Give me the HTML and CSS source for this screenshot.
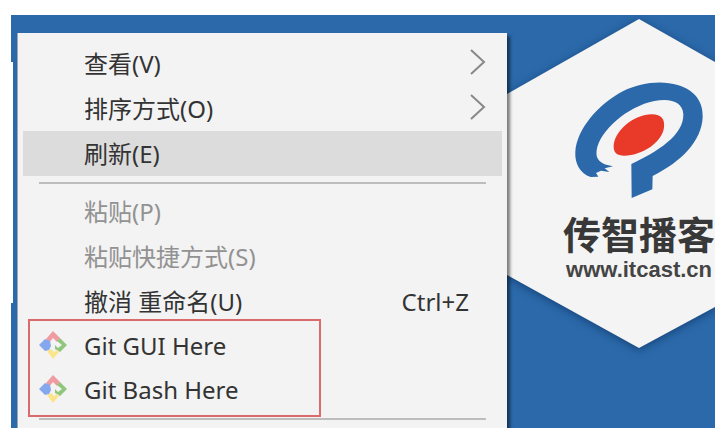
FILE: index.html
```html
<!DOCTYPE html>
<html lang="zh-CN">
<head>
<meta charset="utf-8">
<title>桌面</title>
<link rel="stylesheet" href="styles.css">
</head>
<body>
<svg class="defs" aria-hidden="true">
  <symbol id="git" viewBox="0 0 30 30">
    <path d="M15 1 L22 8 L19 12 L15 8 L11 13 L8 9Z" fill="#ee9ba1"/>
    <path d="M1 15 L7 9 L12 11 L13 16 L11 20 L7 21Z" fill="#85a7ee"/>
    <path d="M22 8 L29 15 L22 22 L17 19 L17 15 L20 18 L24 15 L19 11Z" fill="#8fc67c"/>
    <path d="M9 21 L13 19 L16 22 L20 20 L21 22 L15 29Z" fill="#fae58c"/>
  </symbol>
  <symbol id="arrow" viewBox="0 0 16 26">
    <path d="M1 1 L14 13 L1 25" fill="none" stroke="#888" stroke-width="2"/>
  </symbol>
</svg>
<main class="desktop">
  <nav class="menu" aria-label="右键菜单">
    <button class="item">查看(V)<svg class="arrow"><use href="#arrow"/></svg></button>
    <button class="item">排序方式(O)<svg class="arrow"><use href="#arrow"/></svg></button>
    <button class="item active">刷新(E)</button>
    <hr class="line">
    <button class="item" disabled>粘贴(P)</button>
    <button class="item" disabled>粘贴快捷方式(S)</button>
    <button class="item">撤消 重命名(U)<span class="key">Ctrl+Z</span></button>
    <div class="git">
      <button class="item"><svg class="icon"><use href="#git"/></svg>Git GUI Here</button>
      <button class="item"><svg class="icon"><use href="#git"/></svg>Git Bash Here</button>
    </div>
    <hr class="line last">
  </nav>
  <section class="brand">
    <svg class="hexagon" viewBox="0 0 208 413" preserveAspectRatio="none" aria-hidden="true">
      <path d="M0 79 L132 4 L208 47 V292 L132 333 L0 260Z"/>
    </svg>
    <svg class="logo" viewBox="240 240 411 360" aria-hidden="true">
      <path fill="#2b69aa" d="M302 531 C270 520 254 491 256 455 C260 388 325 312 400 273 C450 247 517 240 563 255 C615 270 640 306 638 352 C635 423 574 486 488 528 L487 568 L425 594 L424 492 C500 456 582 407 580 342 C578 306 542 293 493 303 C412 319 328 393 320 451 C316 477 329 493 369 499 L344 505 L358 516 L333 512 L318 519 L325 530Z"/>
      <path fill="#e83929" d="M371 441 C371 394 430 344 486 343 C514 343 525 358 522 382 C518 424 461 467 402 467 C382 467 371 458 371 441Z"/>
    </svg>
    <h1 class="name">传智播客</h1>
    <p class="site">www.itcast.cn</p>
  </section>
</main>
</body>
</html>
```
FILE: styles.css
```css
*,
*::before,
*::after {
  box-sizing: border-box;
}

body {
  margin: 0;
  padding: 15px 11px 6px;
  background: #fff;
  font-family: "Noto Sans", "Noto Sans CJK SC", sans-serif;
}

.defs {
  position: absolute;
  width: 0;
  height: 0;
}

.desktop {
  position: relative;
  display: grid;
  grid-template-columns: 1fr 208px;
  padding-left: 6px;
  background: #2b69aa;
}

.desktop::before {
  content: "";
  position: absolute;
  left: 0;
  top: 47px;
  width: 2px;
  height: 241px;
  background: #fff;
}

.menu {
  position: relative;
  z-index: 1;
  margin-top: 18px;
  padding: 8px 5px 0;
  border-left: 1px solid #9aa6b2;
  background: #f3f3f3;
  box-shadow: 3px 3px 3px rgba(0, 0, 0, 0.5);
  clip-path: inset(0 -8px 0 0);
}

.item {
  position: relative;
  display: flex;
  align-items: center;
  justify-content: space-between;
  width: 100%;
  height: 45px;
  padding: 0 16px 0 61px;
  border: 0;
  background: none;
  color: #333;
  font: inherit;
  font-size: 24px;
  line-height: 32px;
  white-space: nowrap;
}

.item:disabled {
  color: #929292;
}

.active {
  background: #dcdcdc;
}

.arrow {
  width: 16px;
  height: 26px;
  margin-bottom: 4px;
}

.key {
  padding-right: 17px;
}

.line {
  height: 2px;
  margin: 6px 16px 5px;
  border: 0;
  background: #bdbdbd;
}

.last {
  margin: 6px 16px 8px;
}

.git {
  position: relative;
}

.git::after {
  content: "";
  position: absolute;
  left: 5px;
  top: -5px;
  width: 293px;
  height: 98px;
  border: 2px solid #db6b6b;
  pointer-events: none;
}

.git .item {
  height: 44px;
}

.icon {
  position: absolute;
  left: 15px;
  top: 6px;
  width: 30px;
  height: 30px;
}

.brand {
  position: relative;
  display: flex;
  flex-direction: column;
  align-items: flex-end;
  padding-top: 65px;
  overflow: hidden;
}

.hexagon {
  position: absolute;
  top: 0;
  left: 0;
  width: 100%;
  height: 100%;
  fill: #f4f4f5;
  filter: drop-shadow(0 2px 4px rgba(0, 30, 70, 0.5));
}

.logo {
  position: relative;
  width: 137px;
  height: 120px;
  margin-right: 8px;
}

.name {
  position: relative;
  margin: 10px 0 0;
  color: #383838;
  font-size: 38px;
  line-height: 48px;
}

.site {
  position: relative;
  margin: 0;
  padding-right: 3px;
  color: #444;
  font-family: "Liberation Sans", sans-serif;
  font-size: 22px;
  font-weight: bold;
  line-height: 24px;
}
```
